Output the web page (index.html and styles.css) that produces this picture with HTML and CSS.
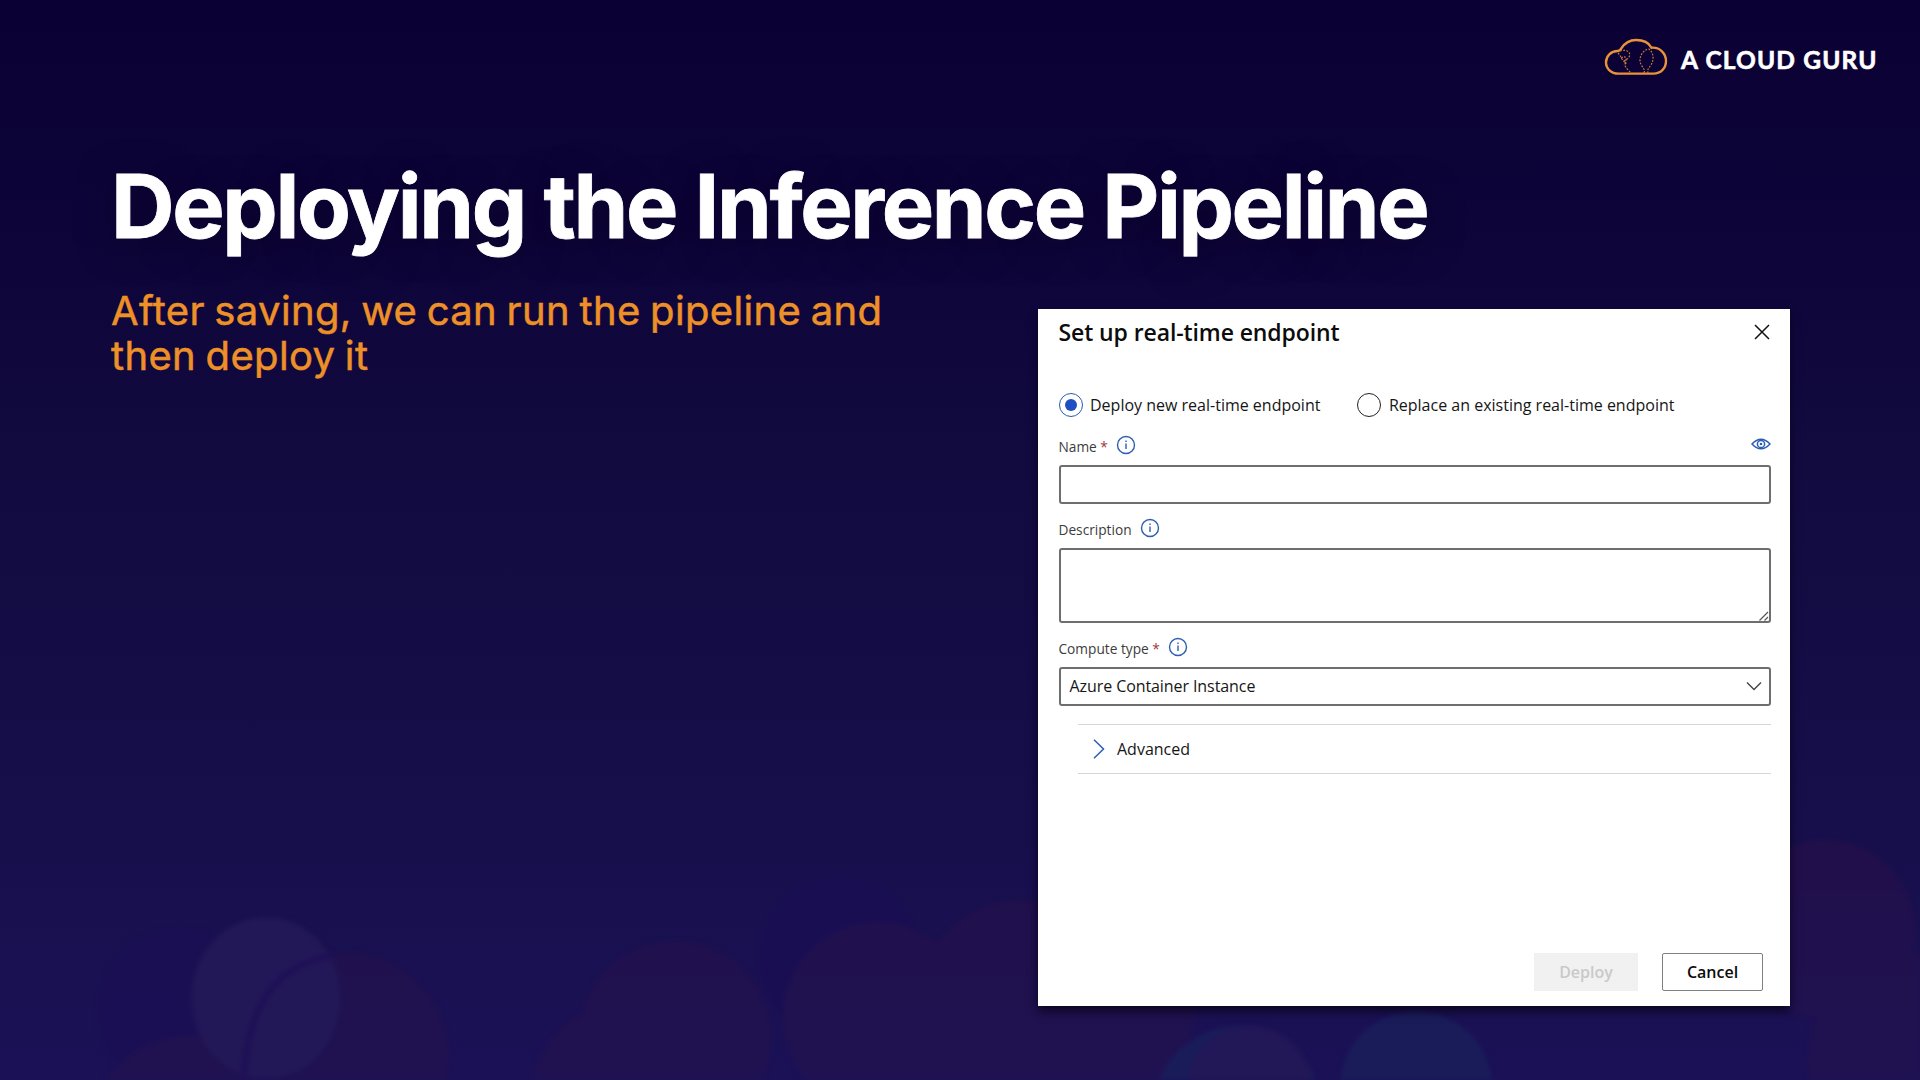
FILE: index.html
```
<!DOCTYPE html>
<html lang="en">
<head>
<meta charset="utf-8">
<title>Deploying the Inference Pipeline</title>
<link rel="stylesheet" href="styles.css">
</head>
<body>
<div class="slide">
  <svg class="bokeh" viewBox="0 0 1920 1080" aria-hidden="true">
    <defs>
      <linearGradient id="plum" gradientUnits="userSpaceOnUse" x1="0" y1="830" x2="0" y2="1080">
        <stop offset="0" stop-color="#210f4a"/><stop offset="1" stop-color="#201252"/>
      </linearGradient>
    </defs>
    <g class="bokeh-blue">
      <circle cx="840" cy="959" r="81"/>
      <circle class="faint" cx="180" cy="1010" r="82"/>
    </g>
    <g fill="url(#plum)">
      <circle cx="345" cy="1056" r="104"/>
      <circle cx="190" cy="1135" r="100"/>
      <circle cx="675" cy="1038" r="97"/>
      <circle cx="630" cy="1100" r="100"/>
      <circle cx="878" cy="1018" r="95"/>
      <circle cx="1020" cy="1000" r="100"/>
      <circle cx="1110" cy="1010" r="85"/>
      <rect x="860" y="940" width="230" height="140"/>
      <circle cx="1825" cy="930" r="90"/>
      <circle cx="1915" cy="1060" r="108"/>
    </g>
    <circle class="bokeh-teal" cx="1238" cy="1110" r="84"/>
    <circle class="bokeh-violet" cx="1250" cy="1088" r="62"/>
    <circle class="bokeh-teal" cx="1416" cy="1087" r="76"/>
    <ellipse class="bokeh-violet" cx="266" cy="998" rx="75" ry="81"/>
    <path class="bokeh-arc" d="M333 956Q249 968 244 1078"/>
  </svg>

  <header class="brand">
    <svg class="brand-cloud" viewBox="0 0 64 38" aria-hidden="true">
      <path class="cloud-line" d="M14.5 35.6C7 35.6 2 30.500 2 24.200C2 18 7 13 13.500 13C15.500 13 16.500 12 17.500 10.200C20.500 5.500 26 2 32 2C39.500 2 45 5 47.500 9.700C56 9 62 15.500 62 23C62 30.500 56.500 35.600 49.500 35.600Z"/>
      <path class="cloud-dots" d="M16 13C22 11 27 14 25.500 18C24 22 20 22 19 24M14 15C18 19 17 22 22 25C19 27 23 31 27 35M17 20C22 17 24 20 20 27M40 35C42 30 36 29 36 22C36 16 41 11 45 11C50 15 50 22 47 27C45 30 43 31 44 35"/>
    </svg>
    <span class="brand-name">A CLOUD GURU</span>
  </header>

  <h1 class="title">Deploying the Inference Pipeline</h1>

  <div class="content">
    <p class="subtitle">After saving, we can run the pipeline and<br>then deploy it</p>

    <section class="dialog">
      <div class="dialog-head">
        <h2 class="dialog-title">Set up real-time endpoint</h2>
        <svg class="close" viewBox="0 0 16 16"><path d="M1 1L15 15M15 1L1 15"/></svg>
      </div>

      <div class="radios">
        <div class="radio radio-on"><span class="radio-ring"></span><span>Deploy new real-time endpoint</span></div>
        <div class="radio"><span class="radio-ring"></span><span>Replace an existing real-time endpoint</span></div>
      </div>

      <div class="fields">
        <div class="field">
          <div class="label">
            <span>Name <i class="req">*</i></span>
            <svg class="info" viewBox="0 0 20 20"><circle cx="10" cy="10" r="8.500"/><path d="M10 8.500V14M10 5.500V7"/></svg>
            <svg class="eye" viewBox="0 0 20 12"><path d="M1 6Q10-3.500 19 6Q10 15.500 1 6Z"/><circle cx="10" cy="6" r="3.600"/><circle class="pupil" cx="10" cy="6" r="1.300"/></svg>
          </div>
          <div class="box"></div>
        </div>

        <div class="field">
          <div class="label">
            <span>Description</span>
            <svg class="info" viewBox="0 0 20 20"><circle cx="10" cy="10" r="8.500"/><path d="M10 8.500V14M10 5.500V7"/></svg>
          </div>
          <div class="box box-area">
            <svg class="grip" viewBox="0 0 10 10"><path d="M.5 9.500L9 1M5.500 9.500L9 6"/></svg>
          </div>
        </div>

        <div class="field">
          <div class="label">
            <span>Compute type <i class="req">*</i></span>
            <svg class="info" viewBox="0 0 20 20"><circle cx="10" cy="10" r="8.500"/><path d="M10 8.500V14M10 5.500V7"/></svg>
          </div>
          <div class="box box-select">
            <span>Azure Container Instance</span>
            <svg class="chevron" viewBox="0 0 16 10"><path d="M1 1.500L8 8.500L15 1.500"/></svg>
          </div>
        </div>
      </div>

      <div class="advanced">
        <svg class="expand" viewBox="0 0 12 20"><path d="M1 .8L10.500 10L1 19.200"/></svg>
        <span>Advanced</span>
      </div>

      <div class="actions">
        <div class="btn btn-disabled">Deploy</div>
        <div class="btn btn-outline">Cancel</div>
      </div>
    </section>
  </div>
</div>
</body>
</html>
```
FILE: styles.css
```
* {
  box-sizing: border-box;
}

body {
  margin: 0;
}

.slide {
  position: relative;
  isolation: isolate;
  width: 1920px;
  height: 1080px;
  overflow: hidden;
  background: linear-gradient(180deg, #0a0033 0%, #0d0439 20%, #120b40 42%, #150e48 70%, #1a1152 90%, #1b1157 100%);
  display: flex;
  flex-direction: column;
}

.bokeh {
  position: absolute;
  inset: 0;
  z-index: -1;
  filter: blur(2px);
}

.bokeh-blue {
  fill: #1a0e53;
}

.faint {
  opacity: 0.5;
}

.bokeh-teal {
  fill: #1a1c5a;
}

.bokeh-violet {
  fill: #221757;
}

.bokeh-arc {
  fill: none;
  stroke: #1f1056;
  stroke-width: 6;
}

.brand {
  display: flex;
  align-items: flex-start;
  height: 80px;
  padding: 38px 0 0 1604px;
}

.brand-cloud {
  width: 64px;
  height: 38px;
  flex: none;
}

.cloud-line {
  fill: none;
  stroke: #e9923c;
  stroke-width: 2.4;
}

.cloud-dots {
  fill: none;
  stroke: #c9793a;
  stroke-width: 1.2;
  stroke-dasharray: 1.8 1.4;
}

.brand-name {
  margin: 7px 0 0 13px;
  font: 700 24.5px/30px Lato, sans-serif;
  letter-spacing: 1.15px;
  color: #fff;
  -webkit-text-stroke: 0.6px #fff;
  white-space: nowrap;
}

.title {
  margin: 72px 0 0 111px;
  font: 700 88px/108px Inter, sans-serif;
  letter-spacing: -2.33px;
  color: #fff;
  -webkit-text-stroke: 0.8px #fff;
  white-space: nowrap;
  text-shadow: 0 6px 36px rgba(12, 5, 38, 0.8);
}

.content {
  display: flex;
  justify-content: space-between;
  align-items: flex-start;
  padding: 0 130px 0 111px;
}

.subtitle {
  margin: 29px 0 0;
  font: 400 40px/44.5px Inter, sans-serif;
  letter-spacing: 0.35px;
  word-spacing: -2.1px;
  color: #ee9028;
  -webkit-text-stroke: 0.5px #ee9028;
  white-space: nowrap;
}

.dialog {
  width: 752px;
  height: 697px;
  margin-top: 49px;
  padding: 0 19.5px 0 20.5px;
  background: #fff;
  box-shadow: 0 5px 9px rgba(8, 4, 24, 0.85);
  font: 400 16px/24px "Open Sans", sans-serif;
  color: #161616;
  display: flex;
  flex-direction: column;
}

.dialog-head {
  display: flex;
  justify-content: space-between;
  align-items: center;
  height: 46px;
}

.dialog-title {
  margin: 0;
  font: 600 23px/32px "Open Sans", sans-serif;
  letter-spacing: -0.1px;
  color: #0c0c0c;
}

.close {
  width: 16px;
  height: 16px;
  margin-right: 1px;
  fill: none;
  stroke: #111;
  stroke-width: 1.5;
}

.radios {
  display: flex;
  gap: 37px;
  margin-top: 38px;
}

.radio {
  display: flex;
  align-items: center;
  gap: 7.5px;
  white-space: nowrap;
}

.radio-ring {
  width: 24px;
  height: 24px;
  border: 1.5px solid #222;
  border-radius: 50%;
  display: grid;
  place-items: center;
}

.radio-on .radio-ring {
  border-color: #2a5cae;
}

.radio-on .radio-ring::after {
  content: "";
  width: 12px;
  height: 12px;
  border-radius: 50%;
  background: #1f4fc0;
}

.fields {
  display: flex;
  flex-direction: column;
  gap: 13px;
  margin-top: 17px;
}

.label {
  display: flex;
  align-items: center;
  height: 31px;
  padding-bottom: 6px;
  font-size: 13.7px;
  line-height: 20px;
  color: #3c3c3c;
}

.req {
  font-style: normal;
  color: #a4373a;
}

.info {
  width: 20px;
  height: 20px;
  margin: -3px 0 0 8px;
  fill: none;
  stroke: #2e5fae;
  stroke-width: 1.4;
}

.eye {
  width: 20px;
  height: 12px;
  margin: -6px 0 0 auto;
  fill: none;
  stroke: #2c5cb4;
  stroke-width: 1.5;
}

.pupil {
  fill: #2c5cb4;
  stroke: none;
}

.box {
  height: 39px;
  border: 2px solid #6e6e6e;
  border-radius: 3px;
  display: flex;
}

.box-area {
  height: 75px;
  align-items: flex-end;
  justify-content: flex-end;
}

.grip {
  width: 10px;
  height: 10px;
  fill: none;
  stroke: #555;
  stroke-width: 1.2;
}

.box-select {
  align-items: center;
  justify-content: space-between;
  padding: 0 7px 1px 9px;
  letter-spacing: -0.08px;
}

.chevron {
  width: 16px;
  height: 10px;
  fill: none;
  stroke: #444;
  stroke-width: 1.4;
}

.advanced {
  display: flex;
  align-items: center;
  gap: 12.5px;
  height: 50px;
  margin: 18px 0 0 19px;
  padding-left: 15px;
  border: solid #d6d6d6;
  border-width: 1.5px 0;
}

.expand {
  width: 12px;
  height: 20px;
  fill: none;
  stroke: #2e5eae;
  stroke-width: 1.5;
}

.actions {
  display: flex;
  justify-content: flex-end;
  gap: 24px;
  margin-top: auto;
  padding: 0 7.5px 15px 0;
}

.btn {
  width: 104px;
  height: 38px;
  font-weight: 600;
  line-height: 38px;
  text-align: center;
}

.btn-disabled {
  background: #f1f1f1;
  color: #c9c9c9;
}

.btn-outline {
  width: 101px;
  border: 1.5px solid #808080;
  border-radius: 2px;
  line-height: 36px;
  color: #0c0c0c;
}
```
